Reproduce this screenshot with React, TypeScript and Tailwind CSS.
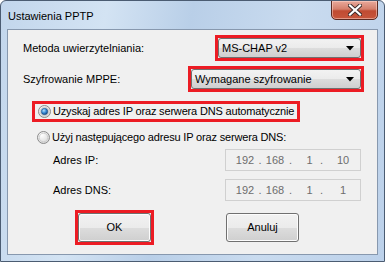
import React from "react";

const font = { fontFamily: '"Liberation Sans", Arial, sans-serif' };

function Radio({ checked }: { checked?: boolean }) {
  return (
    <svg width="13" height="13" viewBox="0 0 13 13" className="shrink-0">
      <defs>
        <radialGradient id="rb" cx="0.35" cy="0.3" r="0.8">
          <stop offset="0" stopColor="#ffffff" />
          <stop offset="1" stopColor="#d4d4d4" />
        </radialGradient>
        <radialGradient id="rd" cx="0.4" cy="0.35" r="0.7">
          <stop offset="0" stopColor="#b8e0fb" />
          <stop offset="0.5" stopColor="#3b8ed8" />
          <stop offset="1" stopColor="#0e3f7c" />
        </radialGradient>
      </defs>
      <circle cx="6.5" cy="6.5" r="6" fill="url(#rb)" stroke="#8a8a8a" strokeWidth="1" />
      <circle cx="6.5" cy="6.5" r="4.3" fill="none" stroke="#c8c8c8" strokeWidth="0.8" />
      {checked && <circle cx="6.5" cy="6.5" r="3.2" fill="url(#rd)" stroke="#1c4f84" strokeWidth="0.6" />}
    </svg>
  );
}

function Combo({ text, width }: { text: string; width: number }) {
  return (
    <div
      className="flex items-center h-[20px] border border-[#707070] rounded-[3px] bg-[linear-gradient(#f2f2f2_0%,#ebebeb_50%,#dddddd_50%,#cfcfcf_100%)] pl-[3px] pr-[6px] text-[11px] text-black"
      style={{ width }}
    >
      <span className="flex-1 leading-none whitespace-nowrap">{text}</span>
      <svg width="8" height="5" viewBox="0 0 8 5">
        <path d="M0 0 H8 L4 4.5 Z" fill="#000" />
      </svg>
    </div>
  );
}

function Field({ parts }: { parts: string[] }) {
  return (
    <div className="w-[136px] h-[22px] border border-[#d0d0d0] bg-[#f0f0f0] flex items-center text-[11px] text-[#6d6d6d] whitespace-nowrap">
      <span className="ml-[8px] w-[22px] text-center">{parts[0]}</span>
      <span className="w-[8px] text-center">.</span>
      <span className="w-[22px] text-center">{parts[1]}</span>
      <span className="w-[9px] text-center">.</span>
      <span className="ml-[8px] w-[13px] text-center">{parts[2]}</span>
      <span className="w-[11px] text-center">.</span>
      <span className="w-[32px] text-center">{parts[3]}</span>
    </div>
  );
}

function Button({ label }: { label: string }) {
  return (
    <div className="w-[73px] h-[29px] border border-[#707070] rounded-[3px] bg-[linear-gradient(#f2f2f2_0%,#ebebeb_50%,#dddddd_50%,#cfcfcf_100%)] flex items-center justify-center text-[11px] text-black shadow-[inset_0_0_0_1px_#fcfcfc]">
      {label}
    </div>
  );
}

export default function App() {
  return (
    <div
      className="relative w-[385px] h-[262px] overflow-hidden rounded-t-[6px] border border-[#4b5c72] bg-[linear-gradient(100deg,#c2d6ec_0%,#d3e3f3_25%,#b9cfe8_45%,#c9dbef_70%,#bcd1ea_100%)] flex flex-col"
      style={font}
    >
      {/* title bar */}
      <div className="h-[28px] flex items-start shrink-0">
        <div className="pl-[7px] pt-[7px] text-[11px] text-black leading-[16px] whitespace-nowrap">Ustawienia PPTP</div>
        <div className="ml-auto mr-[6px] -mt-[1px] w-[47px] h-[20px] rounded-b-[5px] border border-[#5b2a22] bg-[linear-gradient(#e9a99b_0%,#d47f6c_45%,#c04b32_55%,#c7563c_100%)] flex items-center justify-center shadow-[inset_0_0_0_1px_rgba(255,220,210,0.5)]">
          <svg width="14" height="12" viewBox="0 0 14 12">
            <path d="M2 1.5 L12 10.5 M12 1.5 L2 10.5" stroke="#3b2b2a" strokeWidth="4" strokeLinecap="square" />
            <path d="M2 1.5 L12 10.5 M12 1.5 L2 10.5" stroke="#ffffff" strokeWidth="2.2" strokeLinecap="square" />
          </svg>
        </div>
      </div>
      {/* client */}
      <div className="ml-[6px] mr-[6px] h-[226px] border border-[#8798ae] bg-[#f0f0f0] flex flex-col text-[11px] text-black whitespace-nowrap">
        {/* row 1 */}
        <div className="mt-[5px] h-[26px] flex items-center pr-[13px]">
          <span className="pl-[15px]">Metoda uwierzytelniania:</span>
          <div className="ml-auto border-[3px] border-[#ec1c24] h-[26px] flex items-center">
            <Combo text="MS-CHAP v2" width={143} />
          </div>
        </div>
        {/* row 2 */}
        <div className="mt-[5px] h-[26px] flex items-center pr-[13px]">
          <span className="pl-[15px]">Szyfrowanie MPPE:</span>
          <div className="ml-auto border-[3px] border-[#ec1c24] h-[26px] flex items-center">
            <Combo text="Wymagane szyfrowanie" width={170} />
          </div>
        </div>
        {/* radio 1 */}
        <div className="mt-[9px] ml-[24px] w-[268px] h-[21px] border-[3px] border-[#ec1c24] flex items-center pl-[3px] gap-[2px]">
          <Radio checked />
          <span className="tracking-[-0.17px]">Uzyskaj adres IP oraz serwera DNS automatycznie</span>
        </div>
        {/* radio 2 */}
        <div className="mt-[6px] ml-[29px] h-[18px] flex items-center gap-[2px]">
          <Radio />
          <span className="tracking-[-0.17px]">Użyj następującego adresu IP oraz serwera DNS:</span>
        </div>
        {/* ip */}
        <div className="mt-[3px] h-[22px] flex items-center pl-[45px]">
          <span>Adres IP:</span>
          <div className="ml-auto mr-[16px]">
            <Field parts={["192", "168", "1", "10"]} />
          </div>
        </div>
        <div className="mt-[8px] h-[22px] flex items-center pl-[45px]">
          <span>Adres DNS:</span>
          <div className="ml-auto mr-[16px]">
            <Field parts={["192", "168", "1", "1"]} />
          </div>
        </div>
        {/* buttons */}
        <div className="mt-[9px] flex items-start">
          <div className="ml-[67px] border-[3px] border-[#ec1c24] p-0">
            <Button label="OK" />
          </div>
          <div className="ml-[72px] mt-[3px]">
            <Button label="Anuluj" />
          </div>
        </div>
      </div>
    </div>
  );
}
